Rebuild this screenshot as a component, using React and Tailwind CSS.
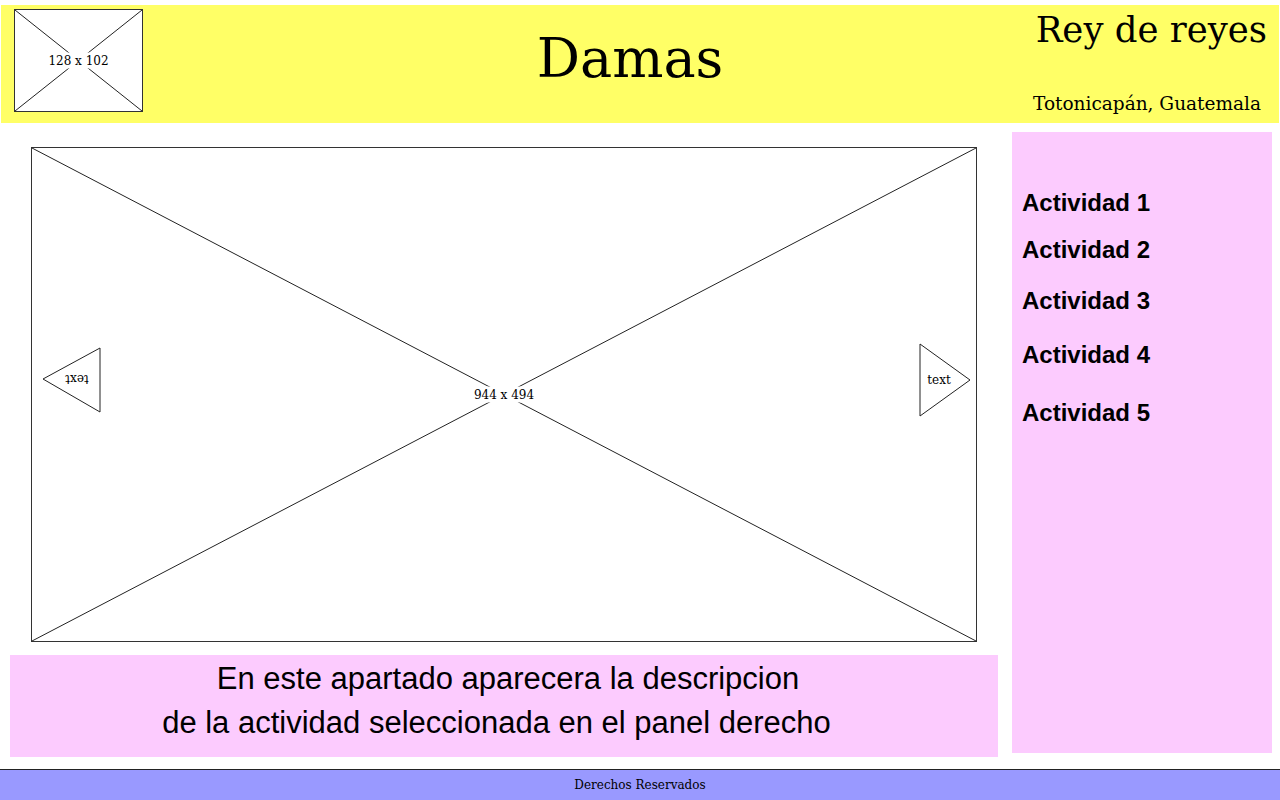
import React from 'react';

const serif = { fontFamily: '"DejaVu Serif", serif' };

function Placeholder({ w, h, label, children }) {
  return (
    <svg width={w} height={h} viewBox={`0 0 ${w} ${h}`} className="block">
      <rect x="0.5" y="0.5" width={w - 1} height={h - 1} fill="#fff" stroke="#333" strokeWidth="1" />
      <line x1="1" y1="1" x2={w - 1} y2={h - 1} stroke="#222" strokeWidth="1" />
      <line x1={w - 1} y1="1" x2="1" y2={h - 1} stroke="#222" strokeWidth="1" />
      <rect x={w / 2 - 34} y={h / 2 - 8} width="68" height="16" fill="#fff" />
      <text x={w / 2} y={h / 2 + 4} textAnchor="middle" fontSize="12" fill="#000" style={serif}>
        {label}
      </text>
      {children}
    </svg>
  );
}

function App() {
  const items = [
    { label: 'Actividad 1', mt: 'mt-[57px]' },
    { label: 'Actividad 2', mt: 'mt-[19px]' },
    { label: 'Actividad 3', mt: 'mt-[23px]' },
    { label: 'Actividad 4', mt: 'mt-[26px]' },
    { label: 'Actividad 5', mt: 'mt-[30px]' },
  ];

  return (
    <div className="w-[1280px] h-[800px] bg-white overflow-hidden flex flex-col">
      {/* Header */}
      <header className="mt-[5px] mx-[1px] h-[118px] bg-[#ffff66] flex">
        <div className="ml-[13px] mt-[4px]">
          <Placeholder w={129} h={103} label="128 x 102" />
        </div>
        <div className="flex-1 pl-[83px] pt-[22px] text-center">
          <h1 className="text-[54px] leading-[64px] text-black" style={serif}>Damas</h1>
        </div>
        <div className="w-[245px] flex flex-col justify-between items-end pt-[5px] pb-[9px]">
          <div className="text-[35.5px] leading-[40px] pr-[12px] whitespace-nowrap" style={serif}>Rey de reyes</div>
          <div className="text-[18.5px] leading-[21px] pr-[18px] whitespace-nowrap" style={serif}>Totonicapán, Guatemala</div>
        </div>
      </header>

      {/* Main */}
      <main className="flex pl-[10px] pr-[8px]">
        <section className="w-[988px] flex flex-col">
          <div className="mt-[24px] ml-[21px]">
            <Placeholder w={946} h={495} label="944 x 494">
              <polygon points="12,232 69,201 69,265" fill="#fff" stroke="#222" strokeWidth="1" />
              <text x="46" y="236" textAnchor="middle" fontSize="12" transform="rotate(180 46 232)" style={serif}>text</text>
              <polygon points="889,197 889,269 939,233" fill="#fff" stroke="#222" strokeWidth="1" />
              <text x="908" y="237" textAnchor="middle" fontSize="12" style={serif}>text</text>
            </Placeholder>
          </div>
          <div
            className="mt-[13px] h-[102px] bg-[#fccbfe] pt-[2px] text-center text-[31px] leading-[44px] text-black"
            style={{ fontFamily: '"Liberation Sans", Arial, sans-serif' }}
          >
            <p className="pl-[8px]">En este apartado aparecera la descripcion</p>
            <p className="pr-[15px]">de la actividad seleccionada en el panel derecho</p>
          </div>
        </section>

        <aside
          className="ml-[14px] mt-[9px] w-[260px] h-[621px] bg-[#fccbfe] pl-[10px] flex flex-col"
          style={{ fontFamily: '"Liberation Sans", Arial, sans-serif' }}
        >
          {items.map((it) => (
            <div key={it.label} className={`${it.mt} text-[24px] leading-[28px] font-bold text-black`}>
              {it.label}
            </div>
          ))}
        </aside>
      </main>

      {/* Footer */}
      <footer className="mt-auto h-[31px] border-t border-[#222] bg-[#9999ff] flex items-center justify-center">
        <span className="text-[12px] text-black" style={serif}>Derechos Reservados</span>
      </footer>
    </div>
  );
}

export default App;
